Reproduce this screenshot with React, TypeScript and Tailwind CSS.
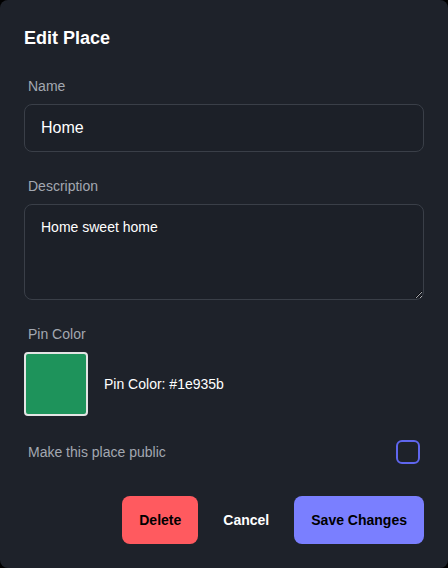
import React, { useState } from "react";

export default function App() {
  const [name, setName] = useState("Home");
  const [description, setDescription] = useState("Home sweet home");
  const [isPublic, setIsPublic] = useState(false);
  const color = "#1e935b";

  return (
    <div className="w-[448px] h-[568px] bg-black" style={{ fontFamily: '"Liberation Sans", Arial, sans-serif' }}>
      <div className="w-full h-full bg-[#1e222a] rounded-lg p-6 flex flex-col">
        <h2 className="text-lg leading-7 font-bold text-white">Edit Place</h2>

        <label className="mt-6 px-1 text-sm leading-5 text-[#a3a8b1]">Name</label>
        <input
          value={name}
          onChange={(e) => setName(e.target.value)}
          className="mt-2 h-12 w-full rounded-lg border border-[#3a3f48] bg-[#1c2028] px-4 text-base text-white outline-none"
        />

        <label className="mt-6 px-1 text-sm leading-5 text-[#a3a8b1]">Description</label>
        <textarea
          value={description}
          onChange={(e) => setDescription(e.target.value)}
          className="mt-2 h-24 w-full rounded-lg border border-[#3a3f48] bg-[#1c2028] px-4 py-3 text-sm text-white outline-none"
        />

        <label className="mt-6 px-1 text-sm leading-5 text-[#a3a8b1]">Pin Color</label>
        <div className="mt-2 flex items-center gap-4">
          <div className="w-16 h-16 rounded border-2 border-[#e4e4e4]" style={{ backgroundColor: color }} />
          <span className="text-sm text-white">Pin Color: {color}</span>
        </div>

        <div className="mt-6 px-1 flex items-center justify-between">
          <span className="text-sm text-[#a3a8b1]">Make this place public</span>
          <button
            onClick={() => setIsPublic(!isPublic)}
            className={`w-6 h-6 rounded-md border-2 border-[#5f66ee] ${isPublic ? "bg-[#7a7fff]" : "bg-transparent"}`}
          />
        </div>

        <div className="mt-8 flex justify-end gap-3">
          <button className="h-12 px-[17px] rounded-lg bg-[#ff5a5f] text-sm font-bold text-black">Delete</button>
          <button className="h-12 w-[72px] text-sm font-bold text-white">Cancel</button>
          <button className="h-12 px-[17px] rounded-lg bg-[#7a7fff] text-sm font-bold text-black">Save Changes</button>
        </div>
      </div>
    </div>
  );
}
